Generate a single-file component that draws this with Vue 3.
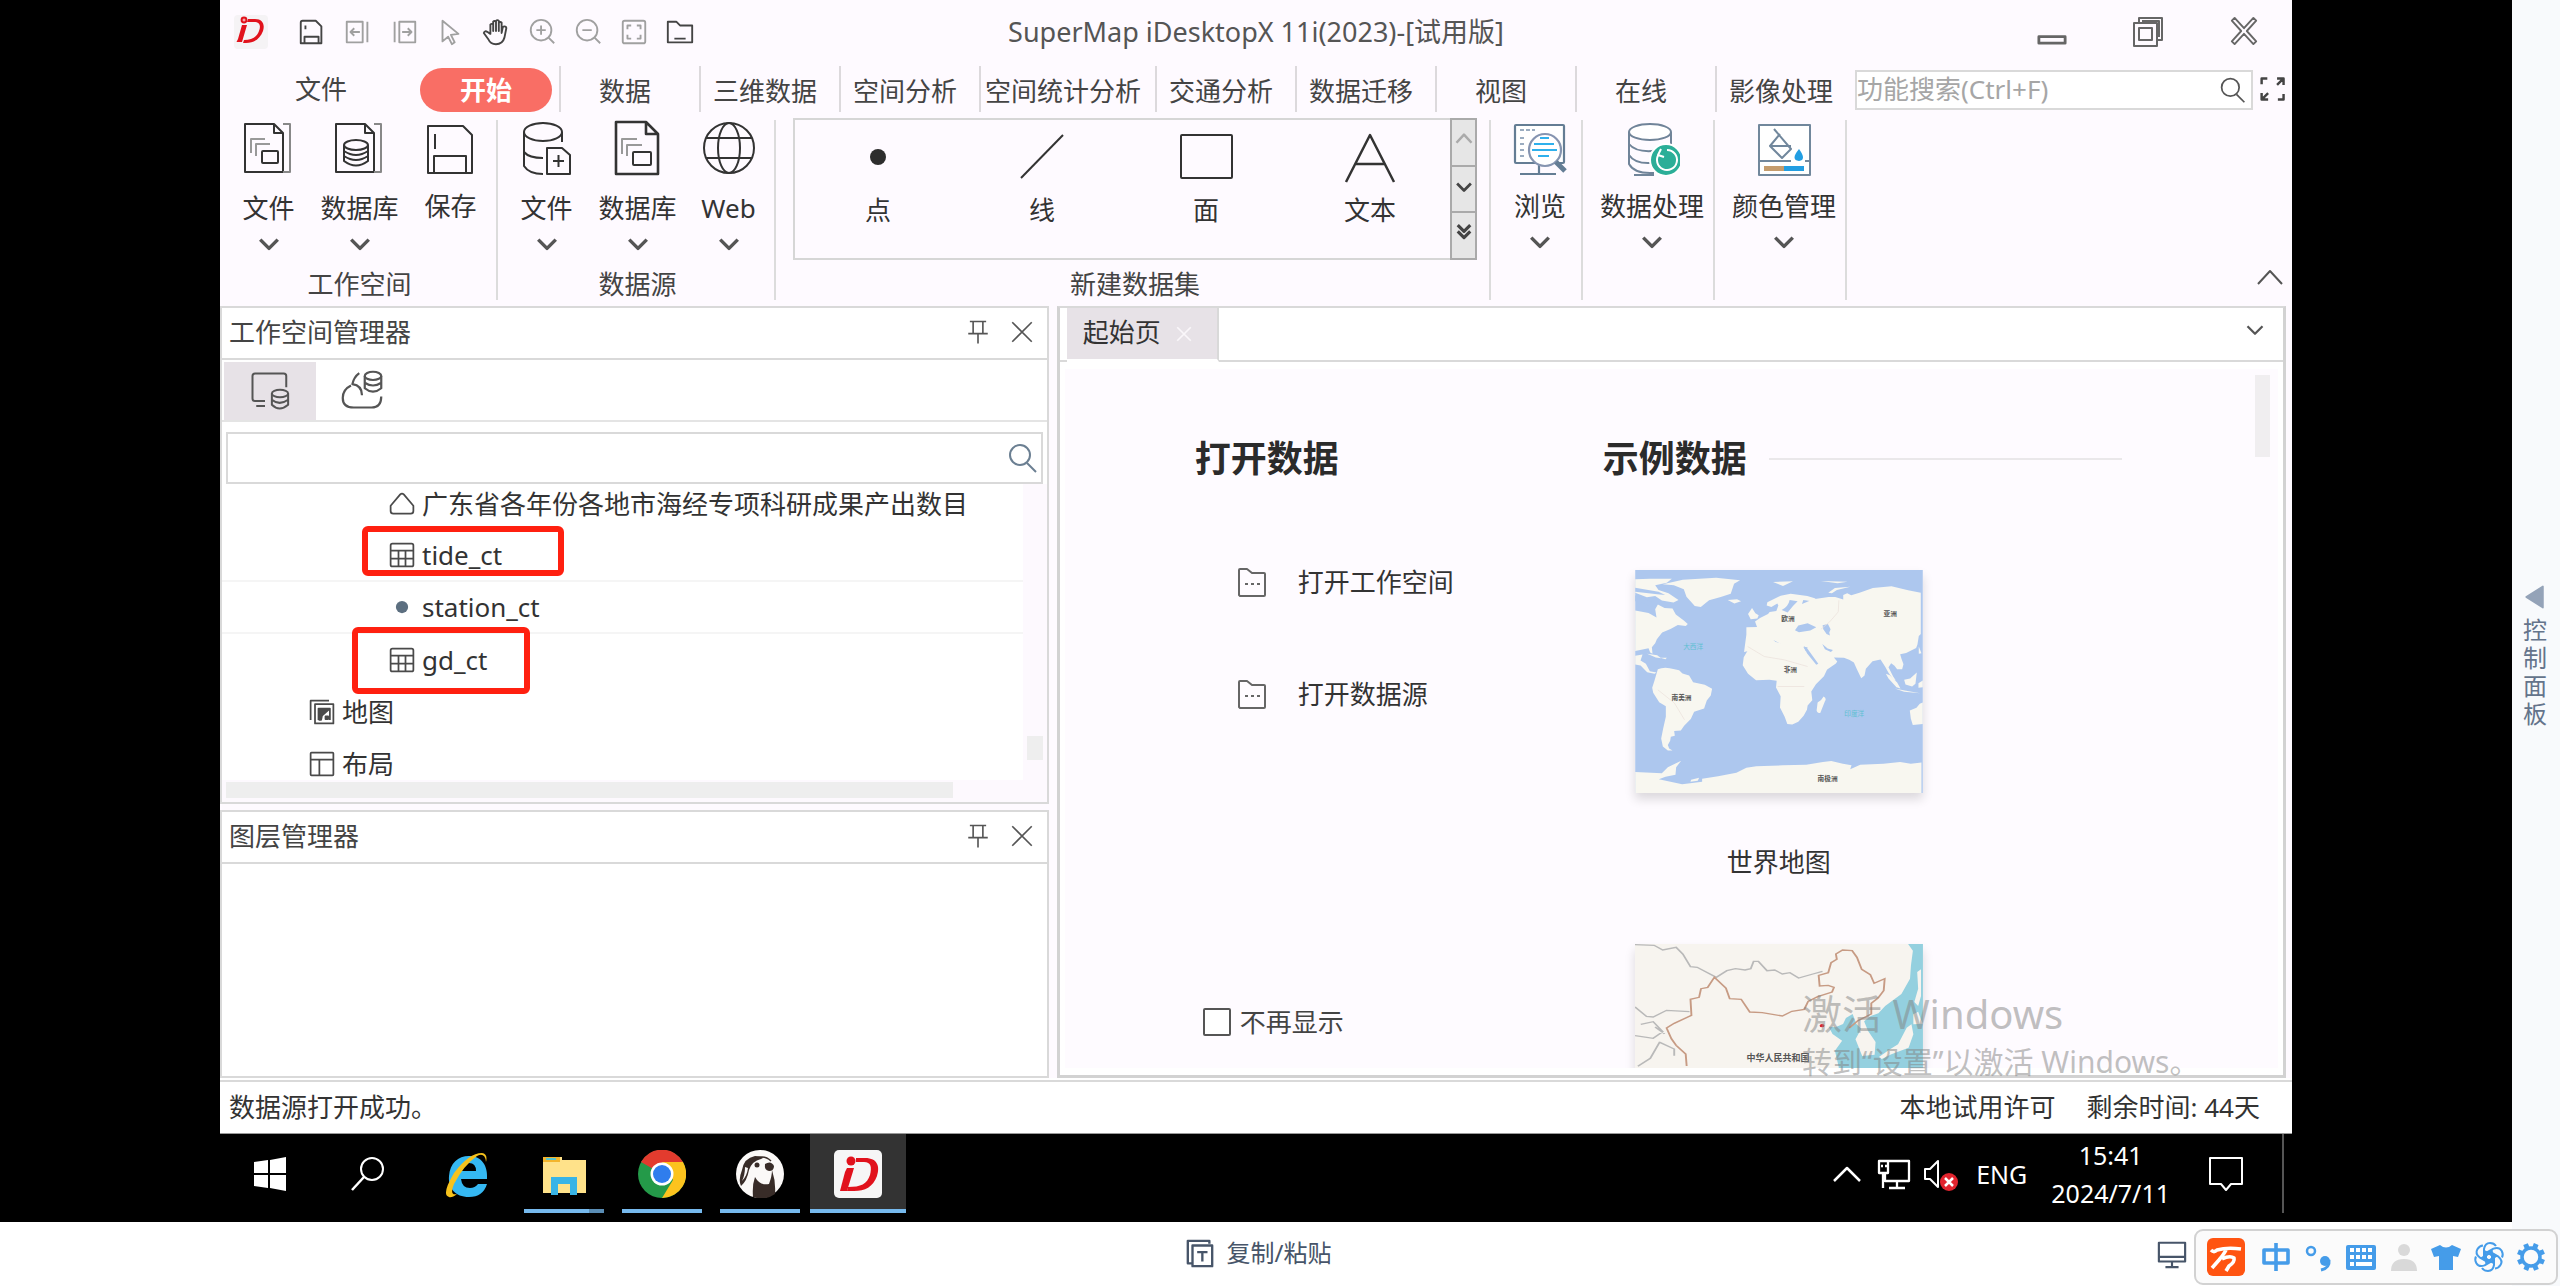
<script setup>
import { ref, h } from 'vue'

const art = {
  logo: '<g fill="#e1121c" stroke="none"><circle cx="10" cy="5" r="3.4"/><path d="M8 10h5l-5 17H2.500L4 24z"/><path d="M14 4h7c8 0 10 6 8 12-3 8-9 12-17 12H9l1-3c8 0 13-3 15-9 2-5 1-9-5-9h-7z"/></g><path d="M8.500 5h3M10 3.500v3" stroke="#fff" stroke-width=".8"/>',
  save: '<path d="M6 4h14l6 6v18H4V6a2 2 0 0 1 2-2zM8 28v-7h15v7M9 9v4"/>',
  undo: '<path d="M4 5h17v22H4zM26 5v22M8 16h10M12 12l-4 4 4 4"/>',
  redo: '<path d="M11 5h17v22H11zM6 5v22M14 16h10M20 12l4 4-4 4"/>',
  pointer: '<path d="M8 4v22l6-5 4 8 3-2-4-8 8-1z"/>',
  hand: '<path d="M10 18V8a2 2 0 0 1 3 0v7V5a2 2 0 0 1 3 0v10V4a2 2 0 0 1 3 0v11V6a2 2 0 0 1 3 0v11l1-5a2 2 0 0 1 4 0l-2 10q-2 7-9 7-6 0-8-5l-5-7q1-3 4-1z"/>',
  zoomin: '<circle cx="15" cy="14" r="11"/><path d="M23 22l6 6M10 14h10M15 9v10"/>',
  zoomout: '<circle cx="15" cy="14" r="11"/><path d="M23 22l6 6M10 14h10"/>',
  fit: '<rect x="4" y="4" width="24" height="24" rx="2"/><path d="M9 13V9h4m6 0h4v4m0 6v4h-4m-6 0H9v-4"/>',
  folder: '<path d="M3 27V5h9l4 4h13v18zM10 23h12"/>',
  min: '<path d="M2 22h28v7H2z"/>',
  restore: '<path d="M7 6V2h23v22h-4M2 7h23v23H2zM7 12h13v12H7zM10 5h17v16"/>',
  winclose: '<path d="M3 5l3-3 10 11L26 2l3 3-10 11 10 11-3 3-10-11L6 30l-3-3 10-11z"/>',
  expand: '<path d="M2 10V3h7m12 0h8v8m0-8l-8 8M29 22v7h-7M2 21v8h8m-8 0l8-8" stroke-width="3"/>',
  find: '<circle cx="13" cy="13" r="10"/><path d="M20 21l9 9"/>',
  down: '<path d="M6 11l10 10 10-10"/>',
  up: '<path d="M4 22L16 9l12 13"/>',
  ddown: '<path d="M6 5l10 10L26 5M6 15l10 10 10-10"/>',
  pin: '<path d="M6 3h20M10 3v14M22 3v14M4 18h24M16 18v12"/>',
  close: '<path d="M4 4l24 24M28 4L4 28"/>',
  wsdb: '<path d="M29 13V4q0-2-2-2H4Q2 2 2 4v18q0 2 2 2h8M5 28h7"/><ellipse cx="24" cy="18" rx="6.500" ry="3"/><path d="M17.500 18v9q6 6 13 0v-9M17.500 23q6 5 13 0"/>',
  clouddb: '<path d="M8 12q-6 3-6 9 0 7 8 7h13q7 0 7-8M16 19q0-7-7-8 1-5 5-8"/><ellipse cx="24" cy="5" rx="6" ry="3"/><path d="M18 5v9q6 5 12 0V5M18 10q6 4 12 0"/>',
  polygon: '<path d="M14 5q2-2 4 0l11 13v6q0 3-3 3H6q-3 0-3-3v-6z"/>',
  table: '<rect x="3" y="3" width="26" height="26" rx="2"/><path d="M3 11h26M3 20h26M12 11v18M20 11v18"/>',
  dot: '<circle cx="16" cy="16" r="7" fill="#5c6f80" stroke="none"/>',
  maps: '<path d="M3 25V3h21M8 7h21v22H8zM12 25V12h13v13"/><path d="M13 13h11l-8 7-1 5h-2zM20 21h3v3h-3z" fill="currentColor"/>',
  layout: '<rect x="3" y="3" width="26" height="26" rx="1"/><path d="M3 11h26M13 11v18"/>',
  openf: '<path d="M3 29V4q0-1 1-1h7l5 4h12q1 0 1 1v21q0 1-1 1H4zM9 18h3m3 0h3m3 0h3"/>',
  triangle: '<path d="M25 4v24L6 16z" fill="#94a3b8" stroke="#94a3b8"/>',
  copy: '<path d="M7 27H3V3h23v3M8 8h21v22H8zM13 15h11M18.500 15v10" stroke-width="2.500"/>',
  monitor: '<path d="M2 4h28v20H2zM2 19h28M16 24v5M9 30h14" stroke-width="2.300"/>',
}
const big = {
  wfile: '<path d="M4 4h29l9 9v39H4zM33 4v9h9"/><path d="M42 4h7v48h-7" stroke="#888"/><path d="M10 33V19h14M15 36V24h14" stroke="#999"/><rect x="21" y="31" width="16" height="12" rx="1"/>',
  wdb: '<path d="M4 4h29l9 9v39H4zM33 4v9h9"/><path d="M42 4h7v48h-7" stroke="#888"/><ellipse cx="24" cy="25" rx="12" ry="5"/><path d="M12 25v16q12 9 24 0V25M12 31q12 8 24 0M12 36q12 8 24 0"/>',
  bigsave: '<path d="M5 6h35l9 9v38H5zM11 53V36h32v17M12 14v15"/>',
  dbadd: '<ellipse cx="24" cy="12" rx="19" ry="9"/><path d="M43 12v10M5 12v34q5 8 19 8M5 32q5 6 19 6M28 28h15l8 7v19H28zM34 41h11M39.500 35v12"/>',
  dfile: '<path d="M6 2h30l12 12v40H6zM36 2v12h12" stroke-width="2.600"/><path d="M12 34V19h15M17 36V25h15" stroke="#999"/><rect x="23" y="32" width="18" height="13" rx="1"/>',
  globe: '<circle cx="28" cy="28" r="25"/><ellipse cx="28" cy="28" rx="11" ry="25"/><path d="M5 18h46M5 38h46"/>',
  point: '<circle cx="28" cy="29" r="8" fill="#2d2d2d" stroke="none"/>',
  line: '<path d="M7 50L49 7"/>',
  area: '<rect x="3" y="7" width="51" height="43" rx="1" stroke-width="2"/>',
  text: '<path d="M4 54L28 7l24 47M13 36h30" stroke-width="2.500"/>',
  browse: '<g stroke="#647d94" stroke-width="2.200"><rect x="3" y="5" width="49" height="38" rx="1" fill="#fff"/><path d="M8 10h15M8 18h6m-6 6h6m-6 6h6m-6 6h6" stroke="#9aacc0" stroke-dasharray="4 2"/><path d="M27 43v10M8 54h36"/><circle cx="33" cy="30" r="16" fill="#fff" stroke="#8594b0"/><path d="M28 18h9M22 24h20M20 30h25M26 36h11" stroke="#2fb0ec"/><path d="M44 42l9 9" stroke-width="5"/></g>',
  process: '<g stroke="#708499" stroke-width="2"><path d="M5 12v32q5 9 21 9h4M47 12v16M5 24q8 10 32 6M5 35q6 9 22 8M10 55h20" fill="none"/><ellipse cx="26" cy="12" rx="21" ry="8" fill="#fff"/></g><circle cx="42" cy="40" r="16" fill="#2bae98" stroke="#fff"/><path d="M35 34a10 10 0 1 0 8-4M37 29l-3 6 6 2" stroke="#fff" stroke-width="2"/>',
  color: '<g stroke="#71879c" stroke-width="2"><rect x="3" y="5" width="51" height="50" fill="#fff"/><path d="M18 9l17 20-9 9-12-12 10-12M14 26h21M3 41h32m14 0h5"/></g><rect x="8" y="46" width="20" height="5" fill="#c59c6d" stroke="none"/><rect x="28" y="46" width="20" height="5" fill="#229ee2" stroke="none"/><path d="M43 29q-9 11 0 12 8-1 0-12z" fill="#229ee2" stroke="none"/>',
}
const task = {
  start: '<path d="M8 12l14-2v13H8zM24 10l16-3v16H24zM8 25h14v13L8 36zM24 25h16v16l-16-3z" fill="#fff" stroke="none"/>',
  search: '<circle cx="28" cy="19" r="11" stroke="#fff" stroke-width="2"/><path d="M20 27L8 40" stroke="#fff" stroke-width="2.500"/>',
  ie: '<path d="M45 29H19q1 9 9 9 5 0 8-4h9q-4 13-18 13C13 47 6 38 7 26 8 13 16 6 27 6c13 0 19 10 18 23zM19 21h15q0-8-7-8t-8 8z" fill="#35b8f2" stroke="none"/><path d="M44 12q2-8-4-9Q27 3 12 23-1 45 7 47q3 1 8-3-8 2-3-10Q22 15 35 6q8-4 9 6z" fill="#f6c21c" stroke="none"/>',
  explorer: '<path d="M3 7h19v3h24v33H3z" fill="#ffe28a" stroke="none"/><path d="M3 7h17v5H3z" fill="#f3b52d" stroke="none"/><path d="M6 8h10v2H6z" fill="#59c6cf" stroke="none"/><path d="M11 27h26v18h-7V34H18v11h-7z" fill="#39b4e6" stroke="none"/>',
  chrome: '<g stroke="none"><circle cx="24" cy="24" r="24" fill="#249a49"/><path d="M24 24L3 12A24 24 0 0 1 45 12z" fill="#e33b2e"/><path d="M24 12h21a24 24 0 0 1-21 36l11-18z" fill="#fcc31e"/><circle cx="24" cy="24" r="11.500" fill="#fff"/><circle cx="24" cy="24" r="9" fill="#2f7ded"/></g>',
  beaver: '<g stroke="none"><circle cx="24" cy="24" r="24" fill="#fbf9f8"/><path d="M17 47q-1-12 2-20 5 9 14 7 3-8 3-14 4 12 3 24-10 7-22 3z" fill="#382c28"/><path d="M19 6Q8 8 6 20q-4 10-1 16 6-5 8-16 3-9 12-11 6-2-6-3z" fill="#382c28"/><path d="M9 17q0 8-3 14 5-5 6-13z" fill="#fbf9f8"/><circle cx="21" cy="15" r="2.500" fill="#382c28"/><path d="M29 14q6-4 9 2 0 5-5 5-5-1-4-7z" fill="#382c28"/></g><path d="M21 8q8-3 14 3" stroke="#382c28" stroke-width="1.500"/>',
  app: '<rect width="48" height="48" rx="5" fill="#f6f6f6" stroke="none"/><g fill="#e1121c" stroke="none"><circle cx="17" cy="11" r="4.500"/><path d="M13 18h7l-7 23H6l5-19z"/><path d="M22 8h9c13 0 15 9 12 18-4 11-12 15-23 15h-7l1-4c13 0 19-3 22-12 2-8 1-13-6-13h-8z"/></g>',
  tup: '<path d="M11 31l13-13 13 13" stroke="#fff" stroke-width="2.500"/>',
  net: '<path d="M16 11h22v20H14V23M8 11h9v12H8zM12 23v15M26 31v6M18 38h16M10 16h2m2 0h2" stroke="#fff" stroke-width="2.300"/>',
  mute: '<path d="M6 19h5l8-8v26l-8-8H6z" stroke="#fff" stroke-width="2"/><circle cx="30" cy="32" r="9" fill="#e2242e" stroke="none"/><path d="M26 28l8 8m0-8l-8 8" stroke="#fff" stroke-width="2.500"/>',
  note: '<path d="M8 8h32v26H29l-5 6-5-6H8z" stroke="#fff" stroke-width="2"/>',
}
const ime = {
  wan: '<rect width="38" height="38" rx="6" fill="#ff5411" stroke="none"/><path d="M4 12q3 3 6 0 10-3 24-1M19 12q-2 4-7 10l-7 8M15 21q8-4 12-1 1 4-5 8l-3 5" stroke="#fff" stroke-width="3.600"/>',
  zhong: '<path d="M7 12h24v13H7zM19 5v28" stroke-width="3.600"/>',
  punct: '<circle cx="11" cy="13" r="4" stroke-width="2.500"/><circle cx="25" cy="23" r="5" fill="currentColor" stroke="none"/><path d="M29 22q1 8-8 10" stroke-width="3"/>',
  keys: '<rect x="4" y="7" width="30" height="25" rx="2" fill="currentColor" stroke="none"/><path d="M8 12h4m2 0h4m2 0h4m2 0h4M8 19h4m2 0h4m2 0h4m2 0h4M8 26h4m2 0h16" stroke="#fff" stroke-width="4"/>',
  user: '<circle cx="19" cy="12" r="6" fill="#d9d9d9" stroke="none"/><path d="M6 33q0-12 13-12t13 12z" fill="#d9d9d9" stroke="none"/>',
  shirt: '<path d="M4 11l9-4q6 5 12 0l9 4-3 8-5-1v14H12V18l-5 1z" fill="currentColor" stroke="none"/>',
  knot: [0, 60, 120, 180, 240, 300].map((a) => `<path transform="rotate(${a} 19 19)" d="M14 22V11q1-6 6-6 4 0 6 3M14 13l8 4v5" stroke-width="2"/>`).join(''),
  gear: '<circle cx="19" cy="19" r="9" stroke-width="3.500"/>' + [0, 45, 90, 135, 180, 225, 270, 315].map((a) => `<path transform="rotate(${a + 22} 19 19)" d="M19 5v5" stroke-width="5"/>`).join(''),
}

const Ico = (p) => {
  const [set, box] = art[p.n] ? [art, 32] : big[p.n] ? [big, 56] : task[p.n] ? [task, 48] : [ime, 38]
  return h('svg', {
    viewBox: `0 0 ${box} ${box}`, width: p.s || box, height: p.s || box, fill: 'none', stroke: 'currentColor',
    'stroke-width': p.w || 2, 'stroke-linejoin': 'round', 'aria-hidden': 'true', innerHTML: set[p.n],
  })
}
Ico.props = ['n', 's', 'w']

const quick = [
  ['save', '保存', true], ['undo', '后退'], ['redo', '前进'], ['pointer', '选择'], ['hand', '漫游', true],
  ['zoomin', '放大'], ['zoomout', '缩小'], ['fit', '全幅'], ['folder', '打开', true],
]
const tabs = ['数据', '三维数据', '空间分析', '空间统计分析', '交通分析', '数据迁移', '视图', '在线', '影像处理']
const groups = [
  { name: '工作空间', items: [['wfile', '文件', 1], ['wdb', '数据库', 1], ['bigsave', '保存', 0]] },
  { name: '数据源', items: [['dbadd', '文件', 1], ['dfile', '数据库', 1], ['globe', 'Web', 1]] },
]
const shapes = [['point', '点'], ['line', '线'], ['area', '面'], ['text', '文本']]
const tools = [['browse', '浏览', 'narrow'], ['process', '数据处理', ''], ['color', '颜色管理', '']]
const tree = [
  { icon: 'polygon', text: '广东省各年份各地市海经专项科研成果产出数目', deep: true },
  { icon: 'table', text: 'tide_ct', deep: true, mark: 'mark-tide', line: true },
  { icon: 'dot', text: 'station_ct', deep: true, line: true },
  { icon: 'table', text: 'gd_ct', deep: true, mark: 'mark-gd' },
  { icon: 'maps', text: '地图' },
  { icon: 'layout', text: '布局' },
]
const apps = [
  ['start', '开始', ''], ['search', '搜索', ''], ['ie', 'Internet Explorer', ''], ['explorer', '文件资源管理器', 'running many'],
  ['chrome', 'Chrome', 'running'], ['beaver', 'DBeaver', 'running'], ['app', 'iDesktopX', 'running current'],
]
const imeKeys = ['wan', 'zhong', 'punct', 'keys', 'user', 'shirt', 'knot', 'gear']
const command = ref('')
const filter = ref('')
const hide = ref(false)
</script>

<template>
  <div class="page">
    <main class="stage">
      <div class="window">
        <header class="titlebar">
          <div class="quick">
            <span class="logo"><Ico n="logo" /></span>
            <button v-for="q in quick" :key="q[0]" :aria-label="q[1]" :class="{ on: q[2] }"><Ico :n="q[0]" s="30" /></button>
          </div>
          <h1>SuperMap iDesktopX 11i(2023)-[试用版]</h1>
          <div class="controls">
            <button aria-label="最小化"><Ico n="min" s="30" w="3" /></button>
            <button aria-label="还原"><Ico n="restore" /></button>
            <button aria-label="关闭"><Ico n="winclose" s="30" /></button>
          </div>
        </header>

        <nav class="tabs">
          <button class="file">文件</button>
          <button class="active">开始</button>
          <button v-for="t in tabs" :key="t" class="tab" :class="{ wide: t.length > 4 }">{{ t }}</button>
          <label class="command">
            <input v-model="command" aria-label="功能搜索" placeholder="功能搜索(Ctrl+F)" />
            <Ico n="find" s="28" w="2" />
          </label>
          <button class="full" aria-label="全屏"><Ico n="expand" s="26" /></button>
        </nav>

        <section class="ribbon">
          <div v-for="g in groups" :key="g.name" class="group">
            <div class="items">
              <button v-for="i in g.items" :key="i[1]" class="item">
                <Ico :n="i[0]" /><span>{{ i[1] }}</span><Ico v-if="i[2]" class="chev" n="down" s="28" w="4" />
              </button>
            </div>
            <div class="group-name">{{ g.name }}</div>
          </div>
          <div class="group gallery-group">
            <div class="gallery">
              <button v-for="s in shapes" :key="s[1]" class="shape"><Ico :n="s[0]" /><span>{{ s[1] }}</span></button>
              <div class="gallery-bar">
                <button class="dim" aria-label="上移"><Ico n="up" s="20" w="4" /></button>
                <button aria-label="下移"><Ico n="down" s="22" w="4" /></button>
                <button aria-label="展开"><Ico n="ddown" s="20" w="5" /></button>
              </div>
            </div>
            <div class="group-name">新建数据集</div>
          </div>
          <div v-for="t in tools" :key="t[1]" class="group tool" :class="t[2]">
            <button class="item"><Ico :n="t[0]" /><span>{{ t[1] }}</span><Ico class="chev" n="down" s="28" w="4" /></button>
          </div>
          <button class="collapse" aria-label="折叠功能区"><Ico n="up" w="2" /></button>
        </section>

        <div class="work">
          <aside class="side">
            <section class="panel">
              <header class="panel-head">
                <h2>工作空间管理器</h2>
                <button aria-label="固定"><Ico n="pin" s="26" /></button>
                <button aria-label="关闭"><Ico n="close" s="26" /></button>
              </header>
              <div class="panel-tabs">
                <button class="current" aria-label="本地"><Ico n="wsdb" s="40" w="1.600" /></button>
                <button aria-label="云端"><Ico n="clouddb" s="44" w="1.600" /></button>
              </div>
              <label class="filter"><input v-model="filter" aria-label="筛选" /><Ico n="find" /></label>
              <div class="tree">
                <ul>
                  <li v-for="r in tree" :key="r.text" :class="{ deep: r.deep, line: r.line }">
                    <Ico :n="r.icon" s="28" /><span>{{ r.text }}</span><i v-if="r.mark" class="mark" :class="r.mark"></i>
                  </li>
                </ul>
                <div class="vbar"><div class="vthumb"></div></div>
              </div>
              <div class="hbar"><div class="hthumb"></div></div>
            </section>
            <section class="panel layers">
              <header class="panel-head">
                <h2>图层管理器</h2>
                <button aria-label="固定"><Ico n="pin" s="26" /></button>
                <button aria-label="关闭"><Ico n="close" s="26" /></button>
              </header>
            </section>
          </aside>

          <section class="doc">
            <header class="doc-tabs">
              <div class="doc-tab">起始页<button aria-label="关闭标签"><Ico n="close" s="18" w="3" /></button></div>
              <button class="more" aria-label="更多"><Ico n="down" s="24" w="3" /></button>
            </header>
            <div class="start">
              <div class="open">
                <h2>打开数据</h2>
                <a href="#"><Ico n="openf" />打开工作空间</a>
                <a href="#"><Ico n="openf" />打开数据源</a>
                <label class="hide"><input v-model="hide" type="checkbox" />不再显示</label>
              </div>
              <div class="samples">
                <h2>示例数据<span class="rule"></span></h2>
                <figure>
                  <svg class="map" viewBox="132 90 864 670" role="img" aria-label="世界地图">
                    <rect x="132" y="90" width="864" height="670" fill="#adc7ee" />
                    <g fill="#f8f7f0">
                      <path d="M132 118l45 -2 65 0 -15 12 -35 8 10 14 30 10 30 20 -15 8 -35 -6 -20 -14 -25 4 -35 -14z" />
                      <path d="M215 133l60-14 100-6 72 8-18 10-10 30-30 10-35 10-25 20-18-3-25-28-8-22-30-12z" />
                      <path d="M132 212l40 7 24 14-4-25 8-14 20 10 24 2 10 18 24 18 12 10-6 6-24-3-22 12-25 11-16 20-5 12-10 12 2 20-7-4-5-13-40 8z" />
                      <path d="M132 348l22-4-6 18 16 10 12 22 20 4-6 4-22-5-20-20-16-3zM168 342l30 4 12 9-16-2zM207 354l20 0-4 4z" />
                      <path d="M200 388q20-9 50 0l14 3 10 10 20 6 12 20 35 8 22 12-4 20-12 15-8 24-30 10-10 22-20 20-10 14-20 2 2 14-12 3-2 12-7 13 4 10 10 6-14 0-15-12-5-24 6-30 8-35 0-32-20-12-18-28-3-15 7-22z" />
                      <path d="M410 180l28-2 12 6-20 7zM546 126l60-2-30 14zM690 123l80 2-30 5zM712 158l20-14 46-4-40 10-15 10z" />
                      <path d="M466 284v-22l32-1-6-16 15-11 24-12 5-6 20-3 6-16-3-6-18 10-14-4 2-10 40-20 30-6 50 7 25 8-12 8-25-4-4 12 34-14 46-7 20 0 24 8 0-14 12-5 12 6 25-8 40-14 56-5 50 12 38 7v124l-6 6-4 26 -4 10-30 15-18 4 4 14 6 16-4 15-15 0-8-10-10-8-8 12 14 28 8 12-8-4-14-19-10-18-14-22-24 5-20 23-4 20-10 8-14-29-8-18-14-8-16-6-30-1 10 12-4 6-23 16-28 16-40-49-4-10 10-22-14 0-28 1-8-5-3-8-12 4 8 12-10 2-12-15-24-13 20 18-4 6-6 8-18-19-8-7-18 3-18 9-12 13-24 5z" />
                      <path d="M480 296l30-4 30-5 8 18 30 7 4-8 50 8 16 28 24 38 15 10 24-4-12 25-24 24-14 22 3 26-14 16-2 13-10 18-16 18-18 8-15-1-8-22-14-28 2-34-14-26 2-20-22-3-40 1-24-19-16-26 3-24 12-20 20-18z" />
                      <path d="M680 488q12-6 18-18 10 6 4 14l-14 36q-9 0-11-8zM471 222l12-18 10 16 10 6-4 10-20 2z" />
                      <path d="M940 420l18-4 20-18-4 34-10 8-20-6zM885 402l12 4 22 22 10 18-12-4-24-26zM912 446l30 6 46 8-48-4zM984 320l8 20-8 2zM983 430l13-8v20l-13 2z" />
                      <path d="M957 512l20-8 10-12 9-4v65l-30 3-6-20z" />
                      <path d="M132 697l80 4 18-18 40-20-15 20-2 22-30 6-20 8 70 15 60-8 0-9 48-7 55-11 30-15 30-4 80-3 70-2 50-8 25-3 35 8 26 5-4 12 30-14 70-3 50-5 32 5 32-4v92H132z" />
                      <path d="M300 720l24-6-4 9-22 3z" />
                    </g>
                    <g fill="#adc7ee">
                      <path d="M612 271l10-14 28-7 26 12-18 10-34 5zM695 256l16-4 8 16-4 10 2 9-10-5-10-14zM572 210q20-10 24-30l24 4-14 14-16 20zM638 318l10 6 34 48-6 3-28-35zM694 312l16 14 16 4-6 6-18-8zM132 143l70 12 20 10-24-2-66-8zM132 166l28 12 40 16-20 6-24-10-24-6z" />
                    </g>
                    <path d="M744 181l-2 35-26 30-26 22M470 320l50 30 60 10 70 20M560 440l80 0M200 450l50 40 30 50" fill="none" stroke="#eadfda" stroke-width="2" />
                    <g class="place">
                      <text x="591" y="244">欧洲</text><text x="898" y="228">亚洲</text><text x="598" y="396">非洲</text>
                      <text x="271" y="480">南美洲</text><text x="710" y="724">南极洲</text>
                      <text class="ocean" x="306" y="327">大西洋</text><text class="ocean" x="790" y="530">印度洋</text>
                    </g>
                  </svg>
                  <figcaption>世界地图</figcaption>
                </figure>
                <figure>
                  <svg class="map" viewBox="0 0 288 223" role="img" aria-label="中国地图">
                    <rect width="288" height="223" fill="#f7f4ef" />
                    <g transform="scale(.4783 .3333) translate(-154 -191)" fill="none" stroke-width="4">
                      <path d="M690 191h66v460H570l10-90-8-50 15-30-20-20-8-22 14 2 16-10 6-18 14-12 8 30 10 14-12 32 14 50 26-4 2-38-16-34-8-28 14-16 16-8 14-22 34-36 18-46 2-40 4-44-10-20-12-8z" fill="#94d0df" />
                      <path d="M744 275l8-8v80l-6 30-8-12 8-40zM736 402l10-8 6 24 4 12-20 2zM664 530l24-24 16-14 18-50 10-10 4 30-10 40-36 20-20 14z" fill="#f7f4ef" />
                      <path d="M154 193l40 2 18 14 28-8 14 20 16 38 14 2 40 30 22-20 18-6 20 4 12-4 6-22 10 0 18 28 16-2 16 12 16-4 18 16 30-12 20-8M154 380l24 28 14 2 28-20 48 4M154 466l38 8 20-20-20-30-26 8M206 484l-20 50-26 24M206 486l30 20 0 20M196 440l20 20" stroke="#b9b9b9" />
                      <path d="M262 557l-2-36-20-26-10-20-10-32 16-14 36-24-2-48 18-6 4-26 14-4 14-30 24 32 8 32 24 2 18 38 26 2 42 10 20-14 26-6 8-24 20-14 30-14 4-14-12-6-18 2-2-32 20-8 6-30 12-10-2-16 14-12 20 2 10 20 10 36 18 16 8 26 22-14-2 36-12 22-14 16 0 32-28 20-18 22" stroke="#c79b84" />
                      <circle cx="545" cy="436" r="5" fill="#d8262c" />
                    </g>
                    <text class="country" x="143" y="117">中华人民共和国</text>
                  </svg>
                </figure>
              </div>
              <div class="start-thumb"></div>
            </div>
          </section>
        </div>

        <footer class="status">
          <span class="message">数据源打开成功。</span><span>本地试用许可</span><span>剩余时间: 44天</span>
        </footer>
        <div class="activate"><p>激活 Windows</p><p class="hint">转到“设置”以激活 Windows。</p></div>
      </div>

      <footer class="taskbar">
        <button v-for="a in apps" :key="a[0]" :class="a[2]" :aria-label="a[1]"><Ico :n="a[0]" /></button>
        <div class="tray">
          <Ico n="tup" /><Ico n="net" /><Ico n="mute" /><span class="lang">ENG</span>
          <time datetime="2024-07-11T15:41">15:41<br />2024/7/11</time><Ico class="note" n="note" />
        </div>
      </footer>
    </main>

    <aside class="rail"><button><Ico n="triangle" s="28" /><span>控制面板</span></button></aside>

    <footer class="bottom">
      <button class="paste"><Ico n="copy" s="30" />复制/粘贴</button>
      <div class="ime">
        <Ico class="screen" n="monitor" s="30" />
        <div class="ime-bar"><button v-for="k in imeKeys" :key="k" :aria-label="k"><Ico :n="k" /></button></div>
      </div>
    </footer>
  </div>
</template>

<style>
body { margin: 0; background: #fff; }
</style>

<style scoped>
* { box-sizing: border-box; }
.page {
  display: grid; grid-template: minmax(0, 1fr) 64px / minmax(0, 1fr) 48px; height: 100vh; min-height: 1000px;
  font: 26px/36px "Noto Sans", "Noto Sans CJK SC", sans-serif; color: #333;
}
button { border: 0; padding: 0; background: none; font: inherit; color: inherit; }
button svg { display: block; }
h1, h2, p, ul, figure { margin: 0; padding: 0; font-weight: 400; font-size: 26px; }
input { font: inherit; border: 0; padding: 0; background: none; outline: 0; min-width: 0; }
input::placeholder { color: #a6a6a6; opacity: 1; }
.stage { display: flex; flex-direction: column; min-width: 0; padding: 0 220px; background: #000; }
.window { position: relative; flex: 1; display: flex; flex-direction: column; min-height: 0; background: #fefaff; }

.titlebar { display: grid; grid-template-columns: 1fr auto 1fr; align-items: center; height: 64px; }
.titlebar h1 { color: #555; font-size: 27px; }
.quick { display: flex; align-items: center; padding-left: 14px; }
.logo { width: 34px; height: 34px; margin-right: 21px; background: #f5f3f5; border-radius: 4px; }
.quick button { display: flex; justify-content: center; width: 46px; color: #a0a0a0; }
.quick .on { color: #444; }
.controls { display: flex; justify-content: flex-end; color: #666; }
.controls button { display: flex; justify-content: center; width: 96px; }

.tabs { display: flex; height: 48px; padding: 2px 6px 0 0; color: #444; white-space: nowrap; }
.file { width: 202px; }
.active { width: 132px; height: 44px; margin: 2px 7px 0 -2px; border-radius: 22px; background: #f96e65; color: #fff; font-weight: 700; }
.tab { width: 140px; padding: 4px 10px 0 0; border-left: 2px solid #dcd9dc; }
.wide { width: 176px; }
.command { flex: 1; display: flex; align-items: center; height: 40px; min-width: 0; margin: 4px 7px 0 0; padding-right: 4px; border: 2px solid #d9d9d9; background: #fff; color: #555; }
.command input { flex: 1; height: 36px; padding-bottom: 3px; }
.full { width: 26px; }

.ribbon { display: flex; height: 194px; }
.group { height: 180px; margin-top: 8px; padding-left: 3px; border-right: 2px solid #dcdcdc; }
.items { display: flex; height: 148px; }
.item { display: flex; flex-direction: column; align-items: center; justify-content: flex-start; width: 91px; height: 148px; white-space: nowrap; color: #333; }
.item span { margin-top: 14px; }
.item:not(:has(.chev)) span { margin-top: 12px; }
.item .chev { margin-top: 4px; color: #555; }
.group-name { line-height: 32px; text-align: center; color: #444; }
.gallery-group { padding: 0 12px 0 17px; }
.gallery { display: flex; width: 684px; height: 142px; margin: -2px 0 8px; padding-left: 1px; border: 2px solid #d6d6d6; }
.shape { display: flex; flex-direction: column; align-items: center; width: 164px; padding-top: 8px; }
.shape span { margin-top: 8px; }
.gallery-bar { flex: 1; display: flex; flex-direction: column; margin: -2px; border: 2px solid #aaa; background: #e6e6e6; }
.gallery-bar button { flex: 1; display: flex; align-items: flex-start; justify-content: center; padding-top: 9px; color: #444; }
.gallery-bar button + button { border-top: 2px solid #aaa; }
.gallery-bar .dim { color: #aaa; }
.tool { width: 132px; padding-left: 8px; }
.tool.narrow { width: 92px; }
.tool .item { width: 100%; }
.tool .item span { margin-top: 12px; }
.collapse { margin: auto 6px 12px auto; color: #555; }

.work { flex: 1; display: flex; gap: 8px; min-height: 0; }
.side { flex: 0 0 40%; display: flex; flex-direction: column; gap: 6px; min-width: 0; }
.panel { border: 2px solid #d9d9d9; background: #fff; }
.layers { flex: 1; }
.panel-head { display: flex; align-items: center; height: 52px; padding: 0 12px 2px 7px; border-bottom: 2px solid #d9d9d9; color: #555; }
.panel-head h2 { flex: 1; color: #444; }
.panel-head button + button { margin-left: 18px; }
.panel-tabs { display: flex; height: 62px; padding: 2px 2px 0; border-bottom: 2px solid #e4e4e4; color: #555; }
.panel-tabs button { display: flex; align-items: center; justify-content: center; width: 92px; }
.panel-tabs .current { background: #e7e2e7; }
.filter { display: flex; align-items: center; height: 52px; margin: 10px 4px 0; padding-right: 2px; border: 2px solid #d9d9d9; color: #6b7f92; }
.filter input { flex: 1; height: 100%; }
.tree { display: flex; height: 296px; overflow: hidden; }
.tree ul { flex: 1; min-width: 0; margin-top: -6px; list-style: none; line-height: 32px; }
.tree li { position: relative; display: flex; align-items: center; gap: 6px; height: 52px; padding-left: 86px; white-space: nowrap; }
.tree .deep { padding-left: 166px; }
.tree .line { border-bottom: 2px solid #f5f5f5; }
.tree svg { flex: none; color: #4a4a4a; }
.mark { position: absolute; z-index: 1; border: 6px solid #ff2010; border-radius: 6px; }
.mark-tide { left: 140px; top: -4px; width: 202px; height: 50px; }
.mark-gd { left: 130px; top: -7px; width: 178px; height: 67px; }
.vbar { width: 24px; padding: 252px 4px 0; background: #fdf9fe; }
.vthumb { height: 24px; background: #eee; }
.hbar { height: 22px; padding: 2px 94px 4px 4px; background: #fdf9fe; }
.hthumb { height: 16px; background: #eee; }

.doc { flex: 1; display: flex; flex-direction: column; min-width: 0; margin-right: 6px; border: 3px solid #d2d2d2; border-top: 2px solid #d9d9d9; background: #fff; }
.doc-tabs { display: flex; flex: none; height: 54px; padding-left: 7px; border-bottom: 2px solid #d9d9d9; }
.doc-tab { display: flex; align-items: center; gap: 14px; height: 54px; padding: 0 24px 4px 16px; border-right: 2px solid #d9d9d9; border-bottom: 3px solid #fff; background: #e7e2e7; }
.doc-tab button { color: #faf7fa; padding-top: 4px; }
.more { margin: 0 16px 8px auto; color: #555; }
.start { flex: 1; display: flex; min-height: 0; margin: 7px 5px; overflow: hidden; background: #fefbff; }
.start h2 { font-size: 36px; line-height: 54px; font-weight: 700; color: #2b2b2b; }
.open { flex: none; display: flex; flex-direction: column; width: 538px; padding: 63px 0 28px 130px; }
.open a { display: flex; align-items: center; gap: 30px; margin: 76px 0 -4px 41px; line-height: 40px; color: #333; text-decoration: none; }
.open a svg { color: #666; }
.hide { display: flex; align-items: center; gap: 9px; margin: auto 0 0 8px; color: #444; }
.hide input { appearance: none; width: 28px; height: 28px; margin: 0; border: 2px solid #555; border-radius: 2px; background: #fff; }
.samples { flex: 1; min-width: 0; padding-top: 63px; }
.samples h2 { display: flex; align-items: center; gap: 22px; margin-bottom: 84px; }
.rule { flex: 1; height: 2px; margin-right: 133px; background: #eae8ea; }
.samples figure { width: 288px; margin: 0 0 64px 32px; }
.map { display: block; width: 288px; height: 223px; box-shadow: 0 6px 10px rgba(0, 0, 0, .14); }
.samples figcaption { margin-top: 51px; text-align: center; }
.place text, .country { font: 700 20px "Noto Sans CJK SC", sans-serif; text-anchor: middle; fill: #555; }
.place .ocean { font-weight: 400; fill: #5fc0d2; }
.country { font-size: 9px; }
.start-thumb { width: 15px; height: 82px; margin: 6px 8px 0 0; background: #f0eef0; }

.status { display: flex; align-items: center; gap: 31px; height: 56px; padding: 2px 32px 0 9px; background: linear-gradient(#fff 2px, #d9d9d9 2px, #d9d9d9 4px, #fff 4px); border-bottom: 1px solid #999; }
.message { flex: 1; }
.activate { position: absolute; right: 100px; bottom: 50px; width: 390px; white-space: nowrap; color: rgba(130, 130, 130, .5); }
.activate p { font-size: 40px; line-height: 52px; }
.activate .hint { font-size: 30px; line-height: 44px; }

.taskbar { display: flex; height: 88px; padding: 0 8px 0 0; }
.taskbar > button { display: flex; align-items: center; justify-content: center; width: 80px; height: 79px; margin-left: 18px; }
.taskbar > button:first-child { margin-left: 10px; }
.taskbar .running { border-bottom: 4px solid #76b9ed; padding-top: 4px; }
.taskbar .many { border-image: linear-gradient(90deg, #76b9ed 78%, #5a8db5 78%) 4; }
.taskbar .current { width: 96px; margin-left: 10px; background: #333; }
.tray { display: flex; align-items: center; height: 79px; margin-left: auto; color: #fff; border-right: 2px solid #555; }
.lang { margin: 0 24px 0 9px; font-size: 25px; }
.tray time { font-size: 25px; line-height: 38px; text-align: center; }
.note { margin: 0 32px 0 32px; }

.rail { grid-row: 1 / 3; grid-column: 2; display: flex; padding-top: 583px; background: #f8fafc; }
.rail button { display: flex; flex-direction: column; align-items: center; justify-content: flex-start; width: 46px; color: #64748b; font-size: 24px; line-height: 28px; }
.rail span { width: 24px; margin-top: 5px; overflow-wrap: anywhere; }

.bottom { position: relative; display: grid; grid-template-columns: 1fr auto 1fr; align-items: center; }
.paste { grid-column: 2; display: flex; align-items: center; gap: 12px; padding: 0 0 2px 4px; font-size: 24px; color: #475569; }
.ime { display: flex; align-items: center; justify-content: flex-end; margin-right: -46px; z-index: 1; }
.screen { margin-right: 7px; color: #475569; }
.ime-bar { display: flex; align-items: center; justify-content: space-between; width: 364px; height: 56px; margin-top: 5px; padding: 0 6px 0 11px; border: 2px solid #d2d2d2; border-radius: 9px; background: #fbfbfb; color: #459ce9; }
.ime-bar button:first-child { margin-right: 8px; }
</style>
